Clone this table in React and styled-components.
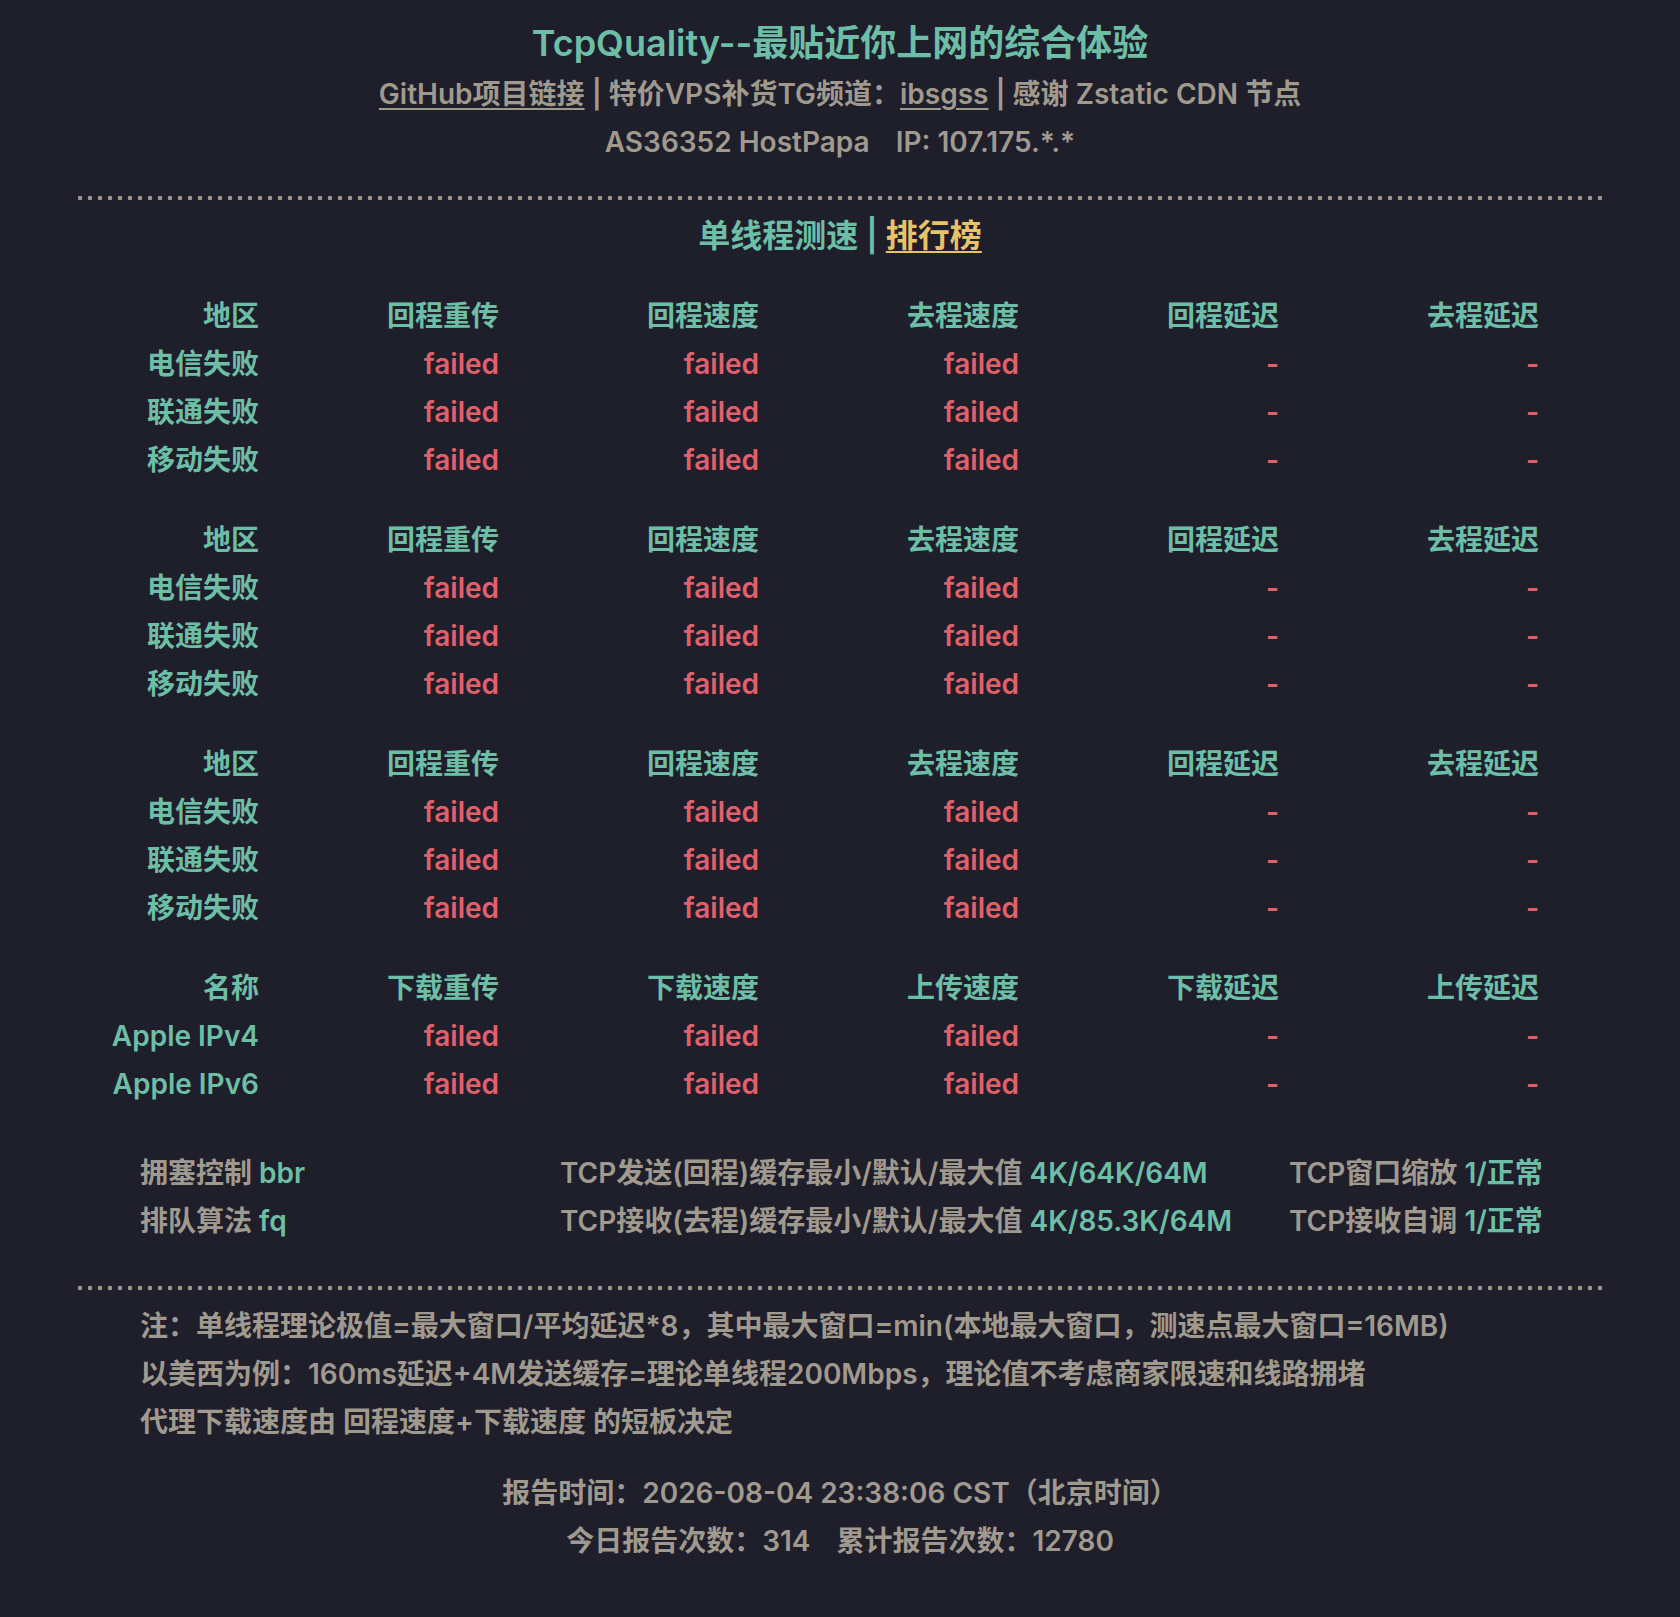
import React from 'react';
import styled, { createGlobalStyle } from 'styled-components';

const teal = '#6dbea6';
const red = '#e0606c';
const gray = '#a09a8e';
const gold = '#e8c36a';

const GlobalStyle = createGlobalStyle`
  html, body {
    margin: 0;
    padding: 0;
    background: #1f1e2b;
  }
  body {
    font-family: Inter, "Noto Sans CJK SC", sans-serif;
    font-weight: 600;
    color: ${gray};
  }
`;

const regions = ['电信失败', '联通失败', '移动失败'];

const tables = [
  {
    head: ['地区', '回程重传', '回程速度', '去程速度', '回程延迟', '去程延迟'],
    rows: regions,
  },
  {
    head: ['地区', '回程重传', '回程速度', '去程速度', '回程延迟', '去程延迟'],
    rows: regions,
  },
  {
    head: ['地区', '回程重传', '回程速度', '去程速度', '回程延迟', '去程延迟'],
    rows: regions,
  },
  {
    head: ['名称', '下载重传', '下载速度', '上传速度', '下载延迟', '上传延迟'],
    rows: ['Apple IPv4', 'Apple IPv6'],
  },
];

const settings = [
  [
    ['拥塞控制', 'bbr'],
    ['TCP发送(回程)缓存最小/默认/最大值', '4K/64K/64M'],
    ['TCP窗口缩放', '1/正常'],
  ],
  [
    ['排队算法', 'fq'],
    ['TCP接收(去程)缓存最小/默认/最大值', '4K/85.3K/64M'],
    ['TCP接收自调', '1/正常'],
  ],
];

const notes = [
  '注：单线程理论极值=最大窗口/平均延迟*8，其中最大窗口=min(本地最大窗口，测速点最大窗口=16MB)',
  '以美西为例：160ms延迟+4M发送缓存=理论单线程200Mbps，理论值不考虑商家限速和线路拥堵',
  '代理下载速度由 回程速度+下载速度 的短板决定',
];

const Page = styled.main`
  width: 1524px;
  margin: 0 auto;
  padding: 16px 0 52px;
  font-size: 28px;
  line-height: 48px;
`;

const Header = styled.header`
  text-align: center;
`;

const Title = styled.h1`
  margin: 0;
  font-size: 36px;
  line-height: 54px;
  font-weight: 600;
  color: ${teal};
`;

const Line = styled.div`
  color: ${gray};
  white-space: pre;
`;

const Link = styled.a`
  color: ${({ $gold }) => ($gold ? gold : gray)};
  text-decoration: underline;
  text-underline-offset: 4px;
  text-decoration-thickness: 2px;
`;

const Gap = styled.span`
  display: inline-block;
  width: ${({ $w }) => $w}px;
`;

const Dots = styled.div`
  height: 10px;
  margin-top: ${({ $top }) => $top}px;
  background-image: radial-gradient(circle, #9d978b 2px, transparent 2.6px);
  background-size: 10px 10px;
  background-position: -3px 0;
`;

const Heading = styled.h2`
  margin: 6px 0 0;
  font-size: 32px;
  line-height: 54px;
  font-weight: 600;
  text-align: center;
  color: ${teal};
`;

const Tables = styled.section`
  margin-top: 29px;
  display: flex;
  flex-direction: column;
  gap: 32px;
`;

const Grid = styled.div`
  display: grid;
  grid-template-columns: 181px 240px repeat(4, 260px);
  text-align: right;
  white-space: nowrap;
`;

const Cell = styled.div`
  color: ${({ $red }) => ($red ? red : teal)};
`;

const Settings = styled.section`
  margin-top: 41px;
  padding-left: 62px;
  display: grid;
  grid-template-columns: 420px 729px auto;
  white-space: nowrap;
`;

const Value = styled.span`
  color: ${teal};
`;

const Notes = styled.section`
  margin-top: 9px;
  padding-left: 62px;
  white-space: nowrap;
`;

const Report = styled.footer`
  margin-top: 23px;
  text-align: center;
  white-space: pre;
`;

const App = () => {
  return (
    <>
      <GlobalStyle />
      <Page>
        <Header>
          <Title>TcpQuality--最贴近你上网的综合体验</Title>
          <Line>
            <Link href="#">GitHub项目链接</Link> | 特价VPS补货TG频道：
            <Link href="#">ibsgss</Link> | 感谢 Zstatic CDN 节点
          </Line>
          <Line>
            AS36352 HostPapa
            <Gap $w={26} />
            IP: 107.175.*.*
          </Line>
        </Header>

        <Dots $top={27} />

        <Heading>
          单线程测速 | <Link href="#" $gold>排行榜</Link>
        </Heading>

        <Tables>
          {tables.map((table, t) => (
            <Grid key={t}>
              {table.head.map((h) => (
                <Cell key={h}>{h}</Cell>
              ))}
              {table.rows.map((name) => (
                <React.Fragment key={name}>
                  <Cell>{name}</Cell>
                  <Cell $red>failed</Cell>
                  <Cell $red>failed</Cell>
                  <Cell $red>failed</Cell>
                  <Cell $red>-</Cell>
                  <Cell $red>-</Cell>
                </React.Fragment>
              ))}
            </Grid>
          ))}
        </Tables>

        <Settings>
          {settings.flat().map(([label, value], i) => (
            <div key={i}>
              {label} <Value>{value}</Value>
            </div>
          ))}
        </Settings>

        <Dots $top={38} />

        <Notes>
          {notes.map((n) => (
            <div key={n}>{n}</div>
          ))}
        </Notes>

        <Report>
          <div>报告时间：2026-08-04 23:38:06 CST（北京时间）</div>
          <div>
            今日报告次数：314
            <Gap $w={26} />
            累计报告次数：12780
          </div>
        </Report>
      </Page>
    </>
  );
};

export default App;
